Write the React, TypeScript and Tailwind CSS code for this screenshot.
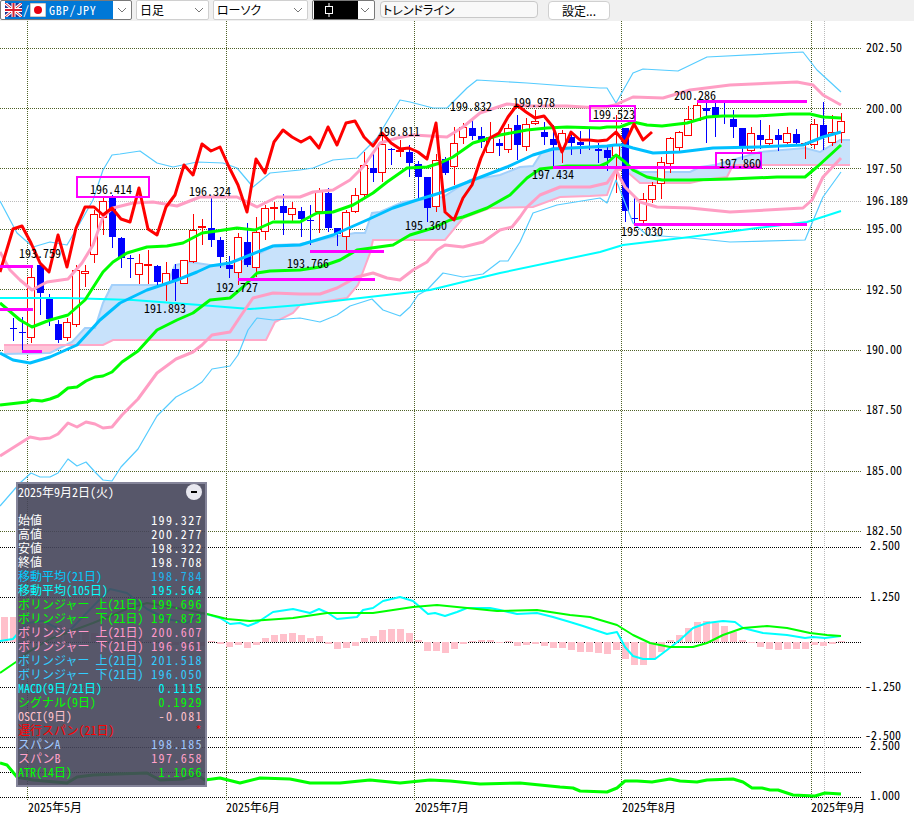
import React from 'react';

type P = [number, number];
// high, low, body top, body bottom, r = hollow red / b = blue
type Candle = [number, number, number, number, 'r' | 'b'];

const candles: Candle[] = [
  [318, 341, 328, 329, 'b'], [317, 350, 332, 333, 'b'], [267, 343, 277, 337, 'r'], [262, 315, 265, 293, 'b'],
  [294, 326, 299, 319, 'b'], [320, 343, 324, 340, 'b'], [318, 341, 322, 337, 'r'], [265, 327, 270, 324, 'r'],
  [265, 287, 271, 273, 'r'], [210, 263, 214, 254, 'r'], [198, 235, 201, 217, 'r'], [195, 248, 197, 237, 'b'],
  [237, 268, 238, 258, 'b'], [255, 278, 258, 259, 'b'], [254, 284, 263, 274, 'r'], [250, 284, 264, 265, 'r'],
  [265, 287, 266, 282, 'b'], [262, 301, 273, 283, 'r'], [264, 301, 269, 280, 'b'], [260, 283, 260, 283, 'r'],
  [214, 263, 230, 261, 'r'], [219, 245, 226, 227, 'r'], [198, 247, 228, 240, 'b'], [237, 268, 240, 257, 'b'],
  [256, 278, 265, 269, 'b'], [233, 285, 237, 272, 'r'], [223, 267, 242, 265, 'b'], [217, 277, 232, 267, 'r'],
  [205, 240, 208, 231, 'r'], [202, 220, 207, 208, 'r'], [194, 235, 206, 213, 'b'], [202, 222, 208, 214, 'r'],
  [207, 237, 211, 219, 'b'], [205, 245, 220, 221, 'b'], [188, 233, 191, 211, 'r'], [188, 232, 193, 228, 'b'],
  [228, 246, 228, 234, 'b'], [210, 253, 212, 236, 'r'], [188, 213, 195, 211, 'r'], [152, 197, 165, 194, 'r'],
  [152, 182, 168, 173, 'b'], [135, 182, 144, 172, 'r'], [148, 165, 149, 150, 'b'], [140, 157, 150, 151, 'r'],
  [145, 177, 152, 163, 'b'], [161, 198, 164, 177, 'b'], [177, 222, 177, 208, 'b'], [154, 212, 160, 206, 'r'],
  [157, 175, 159, 173, 'b'], [127, 185, 143, 166, 'r'], [123, 144, 127, 137, 'r'], [118, 140, 128, 136, 'b'],
  [127, 148, 136, 142, 'b'], [122, 152, 137, 152, 'r'], [139, 156, 143, 146, 'b'], [124, 153, 128, 149, 'r'],
  [115, 160, 125, 145, 'b'], [118, 151, 124, 146, 'r'], [110, 125, 121, 123, 'r'], [122, 145, 132, 137, 'b'],
  [125, 166, 139, 145, 'b'], [130, 163, 133, 148, 'r'], [135, 155, 137, 143, 'b'], [131, 154, 142, 145, 'b'],
  [128, 150, 140, 141, 'b'], [143, 163, 149, 151, 'b'], [146, 171, 150, 158, 'b'], [115, 193, 144, 155, 'r'],
  [128, 222, 128, 211, 'b'], [198, 225, 218, 219, 'b'], [193, 226, 199, 220, 'r'], [182, 203, 185, 199, 'r'],
  [157, 199, 162, 183, 'r'], [137, 173, 138, 163, 'r'], [131, 152, 132, 147, 'r'], [106, 136, 119, 135, 'r'],
  [102, 120, 105, 120, 'r'], [103, 143, 108, 111, 'b'], [103, 137, 107, 116, 'b'], [103, 124, 115, 116, 'b'],
  [110, 138, 119, 127, 'b'], [128, 160, 128, 146, 'b'], [127, 153, 133, 150, 'r'], [120, 149, 135, 140, 'b'],
  [125, 145, 139, 143, 'r'], [129, 151, 135, 140, 'b'], [127, 144, 133, 142, 'r'], [129, 144, 134, 143, 'b'],
  [142, 159, 143, 144, 'r'], [119, 149, 124, 144, 'r'], [102, 150, 125, 137, 'b'], [115, 146, 132, 142, 'r'],
  [113, 143, 121, 132, 'r'],
];

const redVals = [229, 226, 243, 263, 272, 235, 267, 228, 207, 207, 215, 208, 219, 222, 188, 229, 235, 207, 195, 165, 175, 144, 151, 147, 167, 185, 212, 159, 173, 142, 130, 137, 142, 137, 148, 127, 145, 123, 121, 137, 146, 133, 143, 149, 148, 152, 159, 123, 212, 220, 198, 185, 158, 138, 133, 117, 105, 112, 118, 116, 127, 152, 132, 140, 140, 141, 140, 132, 143, 124, 140, 132];
const redLine: P[] = [[0, 272], ...redVals.map((y, i): P => [13 + 9 * i, y])];

const greenUp: P[] = [[0, 303], [20, 320], [32, 327], [50, 320], [68, 315], [85, 300], [103, 272], [113, 262], [127, 253], [147, 247], [167, 246], [183, 243], [202, 233], [217, 231], [237, 228], [255, 230], [273, 222], [300, 222], [317, 213], [333, 212], [353, 205], [373, 193], [387, 182], [407, 168], [427, 167], [440, 163], [453, 157], [473, 143], [500, 135], [527, 130], [547, 128], [567, 127], [600, 128], [607, 127], [620, 127], [633, 122], [647, 125], [662, 126], [687, 123], [707, 117], [723, 116], [757, 116], [790, 114], [810, 114], [823, 117], [841, 118]];
const greenLow: P[] = [[0, 405], [27, 402], [32, 400], [42, 401], [50, 399], [58, 396], [68, 388], [77, 387], [86, 381], [95, 377], [103, 376], [112, 372], [122, 362], [138, 351], [157, 330], [177, 320], [193, 313], [210, 300], [230, 298], [243, 287], [257, 273], [270, 271], [300, 270], [320, 267], [340, 260], [357, 250], [393, 245], [410, 235], [433, 228], [450, 220], [463, 217], [487, 208], [510, 195], [527, 178], [540, 169], [567, 166], [600, 166], [607, 163], [616, 155], [625, 162], [633, 170], [647, 177], [662, 180], [690, 180], [730, 179], [777, 177], [805, 177], [817, 167], [841, 145]];
const pinkUp: P[] = [[0, 252], [10, 270], [20, 280], [32, 290], [47, 282], [68, 279], [82, 263], [93, 245], [103, 217], [113, 208], [133, 203], [153, 202], [177, 206], [200, 197], [237, 197], [257, 207], [277, 197], [300, 197], [313, 192], [333, 190], [350, 180], [363, 167], [380, 143], [397, 138], [413, 135], [447, 137], [463, 127], [480, 113], [507, 104], [527, 106], [567, 106], [600, 108], [615, 105], [633, 97], [663, 98], [690, 90], [730, 85], [797, 82], [813, 85], [823, 95], [841, 105]];
const pinkLow: P[] = [[0, 456], [30, 437], [40, 439], [50, 438], [58, 434], [68, 423], [77, 427], [86, 422], [95, 424], [103, 428], [112, 427], [122, 415], [138, 399], [157, 373], [176, 359], [193, 352], [202, 345], [212, 335], [230, 332], [240, 317], [253, 298], [273, 293], [300, 294], [320, 294], [337, 288], [357, 277], [373, 273], [387, 278], [400, 280], [413, 270], [427, 262], [437, 250], [445, 245], [463, 247], [483, 242], [500, 230], [512, 227], [520, 217], [527, 207], [540, 195], [560, 187], [590, 187], [607, 183], [616, 170], [625, 187], [640, 202], [657, 207], [690, 208], [730, 212], [803, 208], [812, 200], [823, 177], [841, 158]];
const thinUp: P[] = [[0, 201], [17, 233], [33, 247], [50, 242], [67, 245], [80, 223], [93, 200], [103, 170], [112, 155], [120, 154], [140, 151], [157, 163], [173, 167], [197, 162], [223, 163], [237, 168], [253, 187], [270, 173], [300, 170], [313, 168], [333, 160], [357, 158], [377, 138], [400, 100], [410, 102], [433, 108], [447, 108], [467, 88], [477, 80], [527, 83], [567, 86], [600, 88], [607, 88], [616, 103], [633, 73], [643, 69], [678, 71], [707, 57], [803, 52], [817, 70], [841, 92]];
const thinLow: P[] = [[0, 506], [20, 483], [31, 473], [40, 477], [50, 477], [58, 473], [68, 459], [77, 466], [86, 462], [95, 472], [103, 480], [112, 481], [121, 467], [138, 449], [157, 416], [176, 397], [193, 388], [202, 382], [212, 369], [230, 366], [238, 355], [248, 330], [257, 318], [273, 320], [300, 318], [320, 322], [337, 315], [350, 306], [372, 299], [383, 310], [400, 316], [410, 307], [418, 295], [427, 290], [443, 273], [463, 277], [483, 274], [500, 261], [508, 261], [520, 242], [533, 213], [557, 205], [600, 198], [607, 203], [616, 180], [633, 223], [647, 235], [690, 238], [730, 242], [805, 240], [823, 197], [841, 172]];
const ma21: P[] = [[0, 353], [13, 360], [30, 363], [50, 357], [77, 345], [100, 320], [120, 303], [147, 290], [177, 280], [197, 272], [210, 266], [230, 263], [250, 255], [273, 246], [300, 245], [333, 235], [367, 220], [393, 208], [417, 200], [440, 193], [473, 180], [507, 167], [533, 155], [553, 149], [590, 147], [607, 146], [615, 145], [623, 145], [633, 148], [653, 153], [680, 152], [713, 148], [757, 147], [803, 145], [823, 137], [841, 132]];
const ma105: P[] = [[0, 298], [67, 298], [133, 300], [200, 305], [250, 309], [300, 305], [343, 300], [430, 290], [500, 273], [600, 252], [623, 245], [690, 237], [757, 228], [807, 222], [841, 211]];

const spanA: P[] = [[4, 354], [50, 353], [72, 342], [85, 328], [95, 328], [103, 303], [112, 285], [167, 285], [175, 265], [190, 262], [210, 265], [230, 267], [253, 257], [275, 245], [300, 244], [333, 237], [355, 233], [365, 233], [372, 213], [380, 212], [403, 202], [443, 197], [470, 180], [500, 175], [520, 167], [533, 166], [542, 152], [553, 148], [600, 147], [620, 148], [628, 165], [640, 172], [690, 172], [700, 167], [715, 165], [760, 152], [805, 148], [820, 152], [840, 140], [850, 140]];
const spanB: P[] = [[4, 345], [103, 345], [113, 340], [266, 340], [275, 322], [293, 313], [300, 305], [347, 298], [358, 285], [370, 253], [373, 240], [445, 240], [463, 218], [490, 208], [533, 207], [560, 197], [590, 196], [607, 195], [616, 170], [625, 170], [640, 183], [690, 183], [703, 180], [727, 177], [733, 165], [850, 165]];

const macdBars: P[] = [[4, 617], [13, 617], [22, 620], [31, 622], [40, 624], [49, 625], [58, 625], [67, 628], [76, 630], [85, 632], [94, 633], [103, 634], [112, 632], [121, 634], [130, 636], [139, 638], [148, 640], [157, 640], [166, 642], [175, 645], [184, 646], [193, 647], [202, 646], [211, 641], [220, 644], [229, 647], [238, 645], [247, 648], [256, 645], [265, 638], [274, 635], [283, 634], [292, 633], [301, 635], [310, 638], [319, 636], [328, 644], [337, 649], [346, 648], [355, 646], [364, 638], [373, 636], [382, 630], [391, 629], [400, 629], [409, 633], [418, 640], [427, 651], [436, 651], [445, 653], [454, 649], [463, 644], [472, 641], [481, 640], [490, 640], [499, 643], [508, 641], [517, 646], [526, 645], [535, 644], [544, 646], [553, 648], [562, 648], [571, 650], [580, 652], [589, 652], [598, 653], [607, 654], [616, 650], [625, 659], [634, 665], [643, 665], [652, 658], [661, 652], [670, 640], [679, 635], [688, 628], [697, 622], [706, 621], [715, 623], [724, 626], [733, 632], [742, 640], [751, 643], [760, 647], [769, 649], [778, 650], [787, 649], [796, 649], [805, 649], [814, 645], [823, 646], [832, 644], [841, 641]];
const macdCyan: P[] = [[0, 641], [13, 639], [27, 623], [43, 621], [67, 633], [110, 589], [127, 593], [147, 609], [167, 619], [187, 623], [203, 613], [220, 618], [230, 624], [240, 623], [248, 626], [258, 622], [273, 612], [293, 609], [310, 613], [319, 609], [328, 613], [337, 619], [357, 617], [363, 610], [373, 608], [383, 601], [400, 597], [413, 601], [428, 614], [435, 613], [445, 616], [457, 612], [467, 608], [490, 608], [500, 610], [517, 614], [537, 613], [553, 617], [570, 622], [583, 626], [607, 634], [617, 632], [625, 647], [633, 656], [643, 659], [655, 659], [667, 650], [680, 640], [693, 628], [707, 623], [723, 621], [735, 622], [743, 628], [763, 633], [787, 635], [805, 638], [813, 637], [825, 638], [841, 636]];
const macdGreen: P[] = [[0, 673], [16, 662], [27, 653], [50, 639], [93, 623], [127, 609], [147, 603], [177, 608], [207, 614], [227, 619], [250, 621], [293, 618], [327, 613], [373, 613], [413, 607], [437, 605], [467, 608], [497, 611], [537, 610], [570, 615], [590, 617], [617, 625], [633, 635], [650, 643], [670, 647], [693, 647], [707, 643], [723, 635], [743, 628], [767, 626], [787, 628], [810, 633], [827, 635], [841, 636]];
const atr: P[] = [[0, 763], [7, 765], [17, 777], [33, 780], [67, 783], [77, 777], [93, 775], [117, 774], [147, 773], [160, 780], [183, 779], [197, 775], [205, 780], [220, 778], [240, 783], [260, 778], [290, 779], [310, 783], [340, 783], [370, 780], [400, 783], [430, 780], [450, 781], [480, 784], [520, 783], [540, 785], [560, 787], [573, 788], [580, 791], [607, 792], [617, 788], [625, 781], [637, 781], [652, 782], [670, 779], [680, 781], [697, 782], [707, 780], [733, 779], [743, 782], [752, 788], [762, 788], [770, 790], [778, 790], [793, 795], [815, 796], [825, 793], [841, 794]];

const pts = (p: P[]) => p.map(([x, y]) => `${x},${y}`).join(' ');

const priceGrid = [48, 108, 168, 229, 289, 350, 410, 471, 531];
const subGrid = [547, 597, 642, 687, 737, 747, 772, 797];
const vGrid = [27, 226, 414, 621, 811];

const axisLabels: [number, number, string][] = [
  [866, 46, '202.50'], [866, 107, '200.00'], [866, 167, '197.50'], [866, 199, '196.189'], [866, 227, '195.00'],
  [866, 288, '192.50'], [866, 348, '190.00'], [866, 408, '187.50'], [866, 469, '185.00'], [866, 529, '182.50'],
  [870, 544, '2.500'], [870, 595, '1.250'], [865, 685, '-1.250'], [865, 734, '-2.500'], [870, 744, '2.500'], [870, 794, '1.000'],
];
const priceLabels: [number, number, string][] = [
  [19, 252, '193.759'], [90, 188, '196.414'], [189, 190, '196.324'], [144, 307, '191.893'], [216, 286, '192.727'],
  [287, 262, '193.766'], [378, 130, '198.811'], [450, 105, '199.832'], [513, 101, '199.978'], [405, 224, '195.360'],
  [532, 173, '197.434'], [593, 113, '199.523'], [674, 94, '200.286'], [719, 162, '197.860'], [621, 230, '195.030'],
];
const dateLabels: [number, string][] = [[28, '2025年5月'], [226, '2025年6月'], [415, '2025年7月'], [622, '2025年8月'], [811, '2025年9月']];
const magentaSegs: [number, number, number][] = [
  [0, 33, 266.5], [0, 33, 309], [22, 42, 351], [238, 375, 279], [310, 384, 251], [553, 762, 167], [697, 807, 101], [634, 807, 224],
];
const magentaBoxes: [number, number, number, number][] = [[77, 177, 72, 20], [590, 106, 45, 15], [716, 153, 45, 14]];

const rows: [string, string, string, string][] = [
  ['始値', '199.327', 'text-white', 'text-white'],
  ['高値', '200.277', 'text-white', 'text-white'],
  ['安値', '198.322', 'text-white', 'text-white'],
  ['終値', '198.708', 'text-white', 'text-white'],
  ['移動平均(21日)', '198.784', 'text-[#00ccff]', 'text-[#1eb4f0]'],
  ['移動平均(105日)', '195.564', 'text-[#00ffff]', 'text-[#00ffff]'],
  ['ボリンジャー 上(21日)', '199.696', 'text-[#00ff00]', 'text-[#00ff00]'],
  ['ボリンジャー 下(21日)', '197.873', 'text-[#00ff00]', 'text-[#00ff00]'],
  ['ボリンジャー 上(21日)', '200.607', 'text-[#ff99cc]', 'text-[#ff99cc]'],
  ['ボリンジャー 下(21日)', '196.961', 'text-[#ff99cc]', 'text-[#ff99cc]'],
  ['ボリンジャー 上(21日)', '201.518', 'text-[#33ccff]', 'text-[#33ccff]'],
  ['ボリンジャー 下(21日)', '196.050', 'text-[#33ccff]', 'text-[#33ccff]'],
  ['MACD(9日/21日)', '0.1115', 'text-[#00ffff]', 'text-[#00ffff]'],
  ['シグナル(9日)', '0.1929', 'text-[#00ff00]', 'text-[#00ff00]'],
  ['OSCI(9日)', '-0.081', 'text-[#ffc0cb]', 'text-[#ffc0cb]'],
  ['遅行スパン(21日)', '*', 'text-[#ff0000]', 'text-[#ff0000]'],
  ['スパンA', '198.185', 'text-[#a0c8ff]', 'text-[#a0c8ff]'],
  ['スパンB', '197.658', 'text-[#ffa0c8]', 'text-[#ffa0c8]'],
  ['ATR(14日)', '1.1066', 'text-[#00ff00]', 'text-[#00ff00]'],
];

const Chevron = () => (
  <svg width="10" height="6" viewBox="0 0 10 6" className="shrink-0">
    <path d="M1 1 L5 5 L9 1" fill="none" stroke="#777" strokeWidth="1" />
  </svg>
);

const Combo: React.FC<{ className: string; children: React.ReactNode }> = ({ className, children }) => (
  <div className={`h-[20px] bg-white border rounded-[2px] flex items-center justify-between pr-[4px] ${className}`}>
    {children}
    <Chevron />
  </div>
);

const UkFlag = () => (
  <svg width="17" height="14" viewBox="0 0 17 14">
    <rect width="17" height="14" fill="#1f2f8f" />
    <path d="M0 0 L17 14 M17 0 L0 14" stroke="#fff" strokeWidth="3" />
    <path d="M0 0 L17 14 M17 0 L0 14" stroke="#d8202f" strokeWidth="1" />
    <path d="M8.5 0 V14 M0 7 H17" stroke="#fff" strokeWidth="4" />
    <path d="M8.5 0 V14 M0 7 H17" stroke="#d8202f" strokeWidth="2" />
  </svg>
);

const JpFlag = () => (
  <svg width="16" height="14" viewBox="0 0 16 14">
    <rect width="16" height="14" fill="#fff" stroke="#999" />
    <circle cx="8" cy="7" r="4" fill="#e60012" />
  </svg>
);

const PriceChart = () => (
  <svg width="914" height="795" viewBox="0 21 914 795" className="block">
    {/* grid */}
    <g shapeRendering="crispEdges" fill="none" strokeDasharray="1 1">
      {priceGrid.map((y) => <line key={y} x1="0" x2="862" y1={y + 0.5} y2={y + 0.5} stroke="#4f6228" />)}
      {subGrid.map((y) => <line key={y} x1="0" x2="862" y1={y + 0.5} y2={y + 0.5} stroke="#000" />)}
      {vGrid.map((x) => <line key={x} x1={x + 0.5} x2={x + 0.5} y1="21" y2="800" stroke="#4f6228" />)}
      <line x1="0" x2="862" y1="201.5" y2="201.5" stroke="#bbb" />
      <line x1="824.5" x2="824.5" y1="21" y2="800" stroke="#bbb" />
    </g>

    {/* ichimoku cloud */}
    <polygon points={pts([...spanA, ...[...spanB].reverse()])} fill="#c8e2fb" />
    <polygon points="4,345 66,345 50,353 4,353" fill="#ffc4d8" />
    <polyline points={pts(spanA)} fill="none" stroke="#a3d0fb" strokeWidth="2" />
    <polyline points={pts(spanB)} fill="none" stroke="#ffa8c8" strokeWidth="2" />

    {/* candles */}
    <g shapeRendering="crispEdges">
      {candles.map(([hi, lo, top, bot, kind], i) => {
        const x = 13 + 9 * i;
        const col = kind === 'r' ? '#ff0000' : '#0000ff';
        return (
          <g key={i}>
            <line x1={x + 0.5} x2={x + 0.5} y1={hi} y2={lo} stroke={col} />
            {kind === 'r'
              ? <rect x={x - 3.5} y={top + 0.5} width="7" height={Math.max(bot - top, 1)} fill="#fff" stroke={col} />
              : <rect x={x - 3} y={top} width="7" height={Math.max(bot - top, 1)} fill={col} />}
          </g>
        );
      })}
    </g>

    {/* indicators */}
    <g fill="none" strokeLinejoin="round">
      <polyline points={pts(thinUp)} stroke="#55ccff" strokeWidth="1.2" />
      <polyline points={pts(thinLow)} stroke="#55ccff" strokeWidth="1.2" />
      <polyline points={pts(ma105)} stroke="#00ffff" strokeWidth="2" />
      <polyline points={pts(pinkUp)} stroke="#ff9ec4" strokeWidth="3" />
      <polyline points={pts(pinkLow)} stroke="#ff9ec4" strokeWidth="3" />
      <polyline points={pts(greenUp)} stroke="#00ff00" strokeWidth="3" />
      <polyline points={pts(greenLow)} stroke="#00ff00" strokeWidth="3" />
      <polyline points={pts(ma21)} stroke="#00bfff" strokeWidth="3" />
      <polyline points={pts(redLine)} stroke="#ff0000" strokeWidth="3" />
    </g>

    {/* support / resistance marks */}
    <g shapeRendering="crispEdges">
      {magentaSegs.map(([a, b, y], i) => <line key={i} x1={a} x2={b} y1={y} y2={y} stroke="#ff00ff" strokeWidth="3" />)}
      {magentaBoxes.map(([x, y, w, h], i) => <rect key={i} x={x} y={y} width={w} height={h} fill="none" stroke="#ff00ff" strokeWidth="2" />)}
    </g>
    <g fill="#000" fontSize="12">
      {priceLabels.map(([x, y, t]) => <text key={t} x={x} y={y} dominantBaseline="central">{t}</text>)}
    </g>

    {/* macd */}
    <g shapeRendering="crispEdges">
      {macdBars.map(([x, y]) => (
        <rect key={x} x={x - 3} y={Math.min(y, 642)} width="7" height={Math.max(Math.abs(y - 642), 1)} fill="#ffc0cb" />
      ))}
    </g>
    <g fill="none" strokeLinejoin="round">
      <polyline points={pts(macdCyan)} stroke="#00ffff" strokeWidth="2" />
      <polyline points={pts(macdGreen)} stroke="#00ff00" strokeWidth="2" />
      <polyline points={pts(atr)} stroke="#00ff00" strokeWidth="3" />
    </g>

    {/* axes */}
    <g fill="#000" fontSize="12">
      {axisLabels.map(([x, y, t], i) => <text key={i} x={x} y={y} dominantBaseline="central">{t}</text>)}
      {dateLabels.map(([x, t]) => <text key={t} x={x} y={806} dominantBaseline="central">{t}</text>)}
    </g>
  </svg>
);

const InfoPanel = () => (
  <div className="absolute left-[16px] top-[461px] w-[191px] h-[305px] bg-[#45455a]/90 border-2 border-[#85859a] text-[12px] leading-[14px] pr-[2px]">
    <div className="flex items-center justify-between h-[16px] text-white">
      <span>2025年9月2日(火)</span>
      <span className="w-[16px] h-[16px] mr-[1px] rounded-full bg-[#e8e8f0] flex items-center justify-center">
        <span className="w-[6px] h-[2px] bg-black" />
      </span>
    </div>
    <div className="mt-[13px] flex flex-col">
      {rows.map(([label, value, labelCol, valueCol], i) => (
        <div key={i} className="flex items-center justify-between h-[14px]">
          <span className={labelCol}>{label}</span>
          <span className={`${valueCol} tracking-[1.4px]`}>{value}</span>
        </div>
      ))}
    </div>
  </div>
);

export default function App() {
  return (
    <div className="w-[914px] h-[816px] bg-white overflow-hidden font-['Noto_Sans_CJK_JP',sans-serif] [font-feature-settings:'hwid'] text-[12px] text-black">
      <div className="h-[21px] bg-[#f0f0f0] flex items-start text-[12px] leading-none">
        <Combo className="w-[132px] border-[#7a7a7a] pl-[4px]">
          <div className="w-[108px] h-[18px] bg-[#0078d7] text-white flex items-center gap-[1px]">
            <UkFlag />
            <span>/</span>
            <JpFlag />
            <span className="ml-[2px] tracking-[0.8px]">GBP/JPY</span>
          </div>
        </Combo>
        <Combo className="w-[73px] ml-[4px] border-[#d0d0d0] pl-[3px]"><span>日足</span></Combo>
        <Combo className="w-[95px] ml-[4px] border-[#d0d0d0] pl-[3px]"><span className="[font-feature-settings:'palt']">ローソク</span></Combo>
        <Combo className="w-[63px] ml-[4px] border-[#7a7a7a] pl-[1px]">
          <div className="w-[44px] h-[18px] bg-black flex items-center pl-[11px]">
            <svg width="8" height="14" viewBox="0 0 8 14">
              <path d="M4 0 V3 M4 11 V14" stroke="#fff" />
              <rect x="0.5" y="3.5" width="7" height="7" fill="none" stroke="#fff" />
            </svg>
          </div>
        </Combo>
        <div className="w-[158px] h-[17px] ml-[5px] mt-[1px] bg-[#f8f8f8] border border-[#c8c8c8] rounded-[4px] pl-[2px] flex items-center [font-feature-settings:'palt']">トレンドライン</div>
        <button className="w-[62px] h-[19px] ml-[10px] mt-[1px] bg-white border border-[#d0d0d0] rounded-[4px] flex items-center justify-center [font-feature-settings:normal]">設定...</button>
      </div>
      <div className="relative">
        <PriceChart />
        <InfoPanel />
      </div>
    </div>
  );
}
